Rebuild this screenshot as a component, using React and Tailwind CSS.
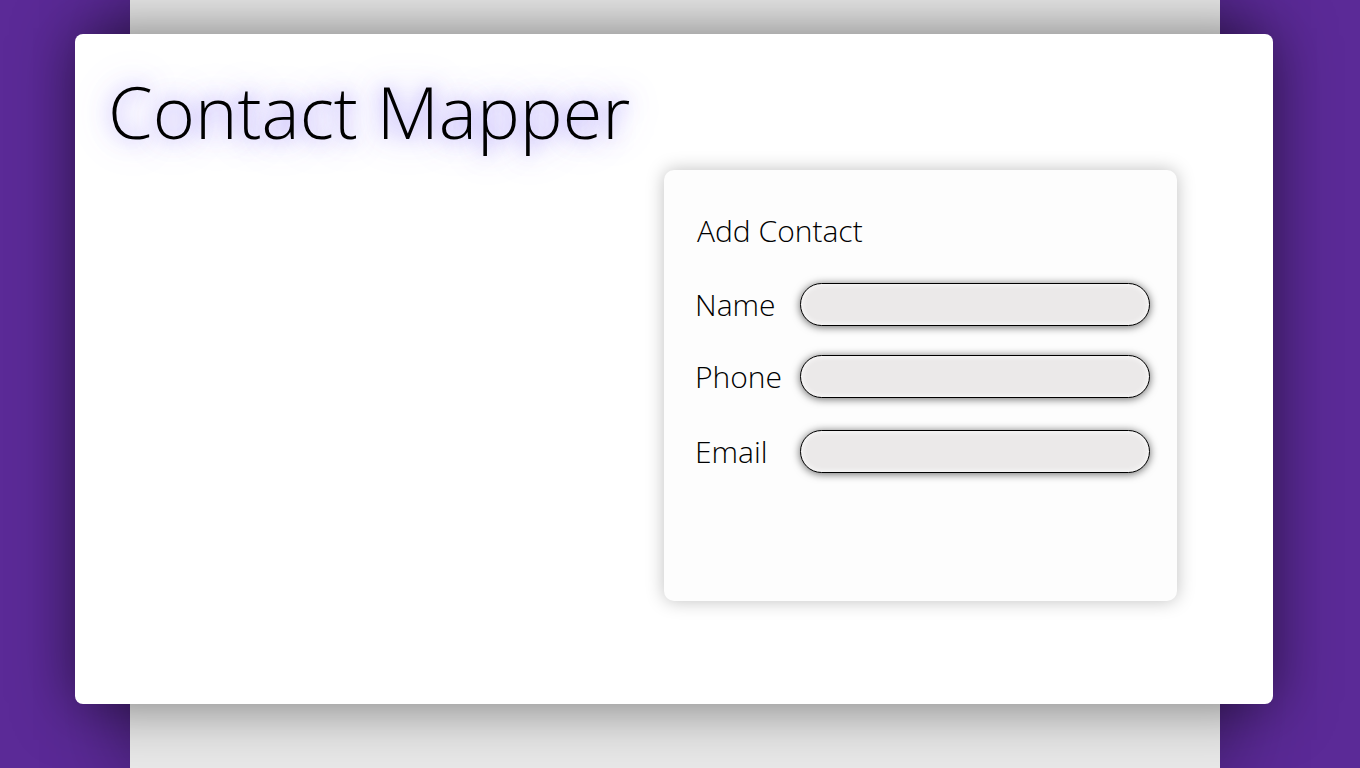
export default function App() {
  const fields = [
    { label: 'Name', mt: 'mt-[33px]' },
    { label: 'Phone', mt: 'mt-[29px]' },
    { label: 'Email', mt: 'mt-[32px]' },
  ];

  return (
    <div className="h-[768px] overflow-hidden bg-[#5b2a97] font-['Open_Sans',sans-serif]">
      <div className="ml-[130px] h-full w-[1090px] bg-[#e8e8e8] pt-[34px] shadow-[0_0_80px_rgba(0,0,0,0.45)]">
        {/* main card */}
        <div className="-ml-[55px] h-[670px] w-[1198px] rounded-lg bg-white shadow-[0_0_60px_rgba(0,0,0,0.5)]">
          <div className="flex">
            <div className="w-[589px] pl-[33px] pt-[38px]">
              <h1 className="whitespace-nowrap text-[72px] font-light leading-[1.1] text-black [text-shadow:0_0_20px_rgba(110,80,245,0.6),0_0_40px_rgba(130,110,250,0.45)]">
                Contact Mapper
              </h1>
            </div>
            <div className="mt-[136px] h-[431px] w-[513px] rounded-[10px] bg-[#fdfdfd] pl-[31px] pr-[27px] pt-[42px] shadow-[0_0_18px_rgba(0,0,0,0.25)]">
              <h2 className="pl-[2px] text-[30px] font-light leading-[38px] text-black">Add Contact</h2>
              {fields.map((f) => (
                <div key={f.label} className={`flex items-center ${f.mt}`}>
                  <label className="w-[105px] text-[30px] font-light leading-[38px] text-black">{f.label}</label>
                  <input
                    type="text"
                    className="h-[43px] w-[350px] rounded-full border border-black bg-[#ebe9e9] px-4 outline-none shadow-[0_1px_8px_rgba(0,0,0,0.6),inset_0_0_6px_rgba(255,255,255,1)]"
                  />
                </div>
              ))}
            </div>
          </div>
        </div>
      </div>
    </div>
  );
}
